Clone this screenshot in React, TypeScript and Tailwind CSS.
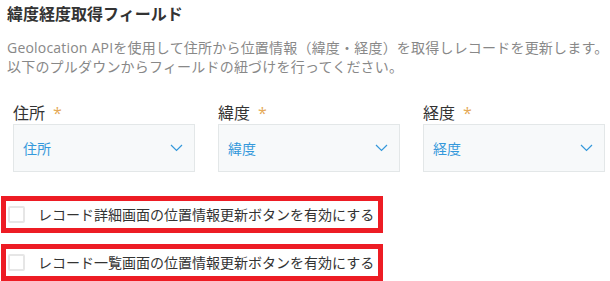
import React from "react";

const font = { fontFamily: '"Open Sans", "Noto Sans CJK JP", sans-serif' };

function Chevron() {
  return (
    <svg width="13" height="8" viewBox="0 0 13 8" fill="none">
      <path d="M1 1l5.5 5.5L12 1" stroke="#3498db" strokeWidth="1.2" />
    </svg>
  );
}

function Field({ label, value }: { label: string; value: string }) {
  return (
    <div className="w-[182px]">
      <div className="text-[16px] leading-[22px] text-[#333]">
        {label}
        <span className="ml-[8px] text-[#e5a958]">*</span>
      </div>
      <div className="flex h-[48px] items-center justify-between border border-[#e3e7e8] bg-[#f7f9fa] pl-[9px] pr-[11px]">
        <span className="text-[14px] text-[#3498db]">{value}</span>
        <Chevron />
      </div>
    </div>
  );
}

function Check({ label, className }: { label: string; className?: string }) {
  return (
    <div
      className={
        "flex h-[37px] w-[382px] items-center border-[5px] border-[#ed1c24] bg-white " +
        (className ?? "")
      }
    >
      <div className="ml-[2px] h-[17px] w-[17px] rounded-[2px] border-2 border-[#e6e6e6] bg-white" />
      <span className="ml-[13px] text-[14px] leading-[20px] text-[#333]">{label}</span>
    </div>
  );
}

export default function App() {
  return (
    <div className="h-[281px] w-[610px] overflow-hidden bg-white pl-[1px] pt-[2px]" style={font}>
      <div className="pl-[6px]">
        <h1 className="text-[16px] font-bold leading-[24px] text-[#333]">緯度経度取得フィールド</h1>
        <p className="mt-[12px] text-[14px] leading-[19px] tracking-[0.2px] text-[#888]">
          Geolocation APIを使用して住所から位置情報（緯度・経度）を取得しレコードを更新します。
          <br />
          以下のプルダウンからフィールドの紐づけを行ってください。
        </p>
        <div className="mt-[26px] flex gap-[23px] pl-[6px]">
          <Field label="住所" value="住所" />
          <Field label="緯度" value="緯度" />
          <Field label="経度" value="経度" />
        </div>
      </div>
      <Check className="mt-[24px]" label="レコード詳細画面の位置情報更新ボタンを有効にする" />
      <Check className="mt-[11px]" label="レコード一覧画面の位置情報更新ボタンを有効にする" />
    </div>
  );
}
